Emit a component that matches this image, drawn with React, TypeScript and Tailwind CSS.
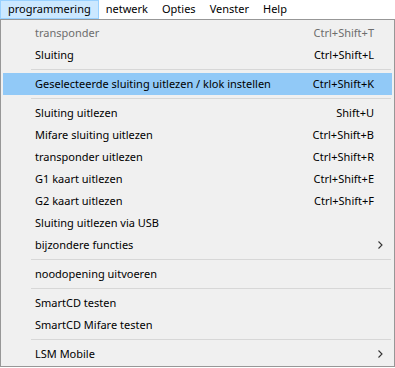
import React from 'react';

type Item =
  | { kind: 'item'; label: string; shortcut?: string; disabled?: boolean; active?: boolean; submenu?: boolean }
  | { kind: 'sep' };

const menuBar = ['programmering', 'netwerk', 'Opties', 'Venster', 'Help'];

const items: Item[] = [
  { kind: 'item', label: 'transponder', shortcut: 'Ctrl+Shift+T', disabled: true },
  { kind: 'item', label: 'Sluiting', shortcut: 'Ctrl+Shift+L' },
  { kind: 'sep' },
  { kind: 'item', label: 'Geselecteerde sluiting uitlezen / klok instellen', shortcut: 'Ctrl+Shift+K', active: true },
  { kind: 'sep' },
  { kind: 'item', label: 'Sluiting uitlezen', shortcut: 'Shift+U' },
  { kind: 'item', label: 'Mifare sluiting uitlezen', shortcut: 'Ctrl+Shift+B' },
  { kind: 'item', label: 'transponder uitlezen', shortcut: 'Ctrl+Shift+R' },
  { kind: 'item', label: 'G1 kaart uitlezen', shortcut: 'Ctrl+Shift+E' },
  { kind: 'item', label: 'G2 kaart uitlezen', shortcut: 'Ctrl+Shift+F' },
  { kind: 'item', label: 'Sluiting uitlezen via USB' },
  { kind: 'item', label: 'bijzondere functies', submenu: true },
  { kind: 'sep' },
  { kind: 'item', label: 'noodopening uitvoeren' },
  { kind: 'sep' },
  { kind: 'item', label: 'SmartCD testen' },
  { kind: 'item', label: 'SmartCD Mifare testen' },
  { kind: 'sep' },
  { kind: 'item', label: 'LSM Mobile', submenu: true },
];

function Chevron() {
  return (
    <svg width="5" height="8" viewBox="0 0 5 8" className="block">
      <path d="M0.5 0.5 L4 4 L0.5 7.5" fill="none" stroke="#333" strokeWidth="1.1" />
    </svg>
  );
}

export default function App() {
  return (
    <div className="w-[395px] h-[368px] bg-white overflow-hidden font-['Noto_Sans',sans-serif] text-[11px] text-black">
      {/* Menu bar */}
      <div className="flex h-[19px] items-stretch bg-white">
        {menuBar.map((m, i) => (
          <div
            key={m}
            className={
              i === 0
                ? 'flex items-center px-[7px] bg-[#cce8ff] border border-[#99d1ff]'
                : 'flex items-center px-[6px] border border-transparent'
            }
          >
            {m}
          </div>
        ))}
      </div>

      {/* Dropdown */}
      <div className="w-[395px] h-[348px] bg-[#f0f0f0] border border-[#979797] px-[2px] py-[2px]">
        {items.map((it, idx) =>
          it.kind === 'sep' ? (
            <div key={idx} className="h-[7px] flex items-center pl-[28px] pr-[1px]">
              <div className="h-px w-full bg-[#d7d7d7]" />
            </div>
          ) : (
            <div
              key={idx}
              className={
                'h-[22px] flex items-center pl-[32px] pr-[14px] ' +
                (it.active ? 'bg-[#91c9f7] ' : '') +
                (it.disabled ? 'text-[#6d6d6d]' : 'text-black')
              }
            >
              <span className="flex-1 whitespace-nowrap">{it.label}</span>
              {it.shortcut && <span className="whitespace-nowrap mr-[4px]">{it.shortcut}</span>}
              {it.submenu && (
                <span className="-mr-[5px]">
                  <Chevron />
                </span>
              )}
            </div>
          )
        )}
      </div>
    </div>
  );
}
